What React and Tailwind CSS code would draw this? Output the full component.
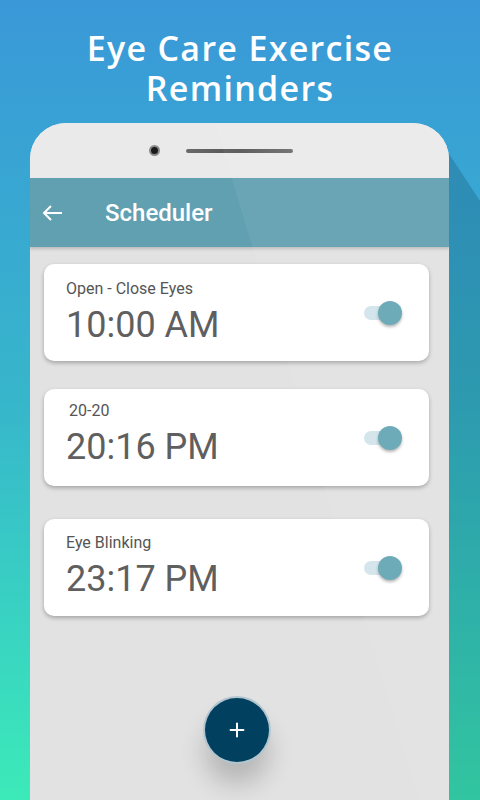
import { Plus } from "lucide-react"

const reminders = [
  { label: "Open - Close Eyes", time: "10:00 AM", top: "mt-[17px]", labelCls: "", blockCls: "pt-[15px]" },
  { label: "20-20", time: "20:16 PM", top: "mt-[28px]", labelCls: "pl-[3px]", blockCls: "pt-[12px]" },
  { label: "Eye Blinking", time: "23:17 PM", top: "mt-[33px]", labelCls: "", blockCls: "pt-[14px]" },
]

// Small switch, always "on" in the screenshot
const Toggle = () => (
  <div className="relative w-[38px] h-[24px] flex items-center">
    <div className="w-[30px] h-[14px] rounded-full bg-[#d2e5ea]" />
    <div className="absolute right-0 top-0 w-[24px] h-[24px] rounded-full bg-[#65a6b5] shadow-[0_2px_3px_rgba(0,0,0,0.3)]" />
  </div>
)

const ReminderCard = ({ item }) => (
  <div className={`${item.top} h-[97px] rounded-[10px] bg-white shadow-[0_2px_4px_rgba(0,0,0,0.28)] flex items-start justify-between pl-[22px] pr-[27px]`}>
    <div className={item.blockCls}>
      <p className={`${item.labelCls} text-[16px] leading-[20px] text-[#555555]`}>{item.label}</p>
      <p className="mt-[6px] text-[36px] leading-[40px] text-[#5f5f5f]">{item.time}</p>
    </div>
    <div className="self-center">
      <Toggle />
    </div>
  </div>
)

export default function App() {
  return (
    <div className="relative w-[480px] h-[800px] overflow-hidden bg-gradient-to-b from-[#3a98d8] via-[#37b6cb] to-[#3ceab8]">
      {/* long shadow behind the phone */}
      <svg className="absolute inset-0" width="480" height="800">
        <polygon points="440,140 480,201 480,800 440,800" fill="rgba(0,20,40,0.17)" />
      </svg>

      <div className="relative pt-[28px] text-center text-white text-[34px] leading-[40px] font-semibold tracking-[1.3px]" style={{ fontFamily: '"Open Sans", sans-serif' }}>
        <h1>Eye Care Exercise</h1>
        <h1>Reminders</h1>
      </div>

      {/* phone */}
      <div className="relative mt-[15px] ml-[30px] w-[419px] h-[677px] rounded-t-[36px] bg-[#e2e2e2] overflow-hidden" style={{ fontFamily: "Roboto, sans-serif" }}>
        <div className="h-[55px] bg-[#eaeaea] flex items-center pl-[119px]">
          <div className="w-[11px] h-[11px] rounded-full bg-[#1a1a1a] border-2 border-[#8a8a8a]" />
          <div className="ml-[26px] w-[107px] h-[4px] rounded-full bg-gradient-to-r from-[#6a6a6a] via-[#555555] to-[#6d6d6d]" />
        </div>

        <div className="relative z-10 h-[69px] bg-[#61a0b1] flex items-center shadow-[0_2px_3px_rgba(0,0,0,0.18)]">
          <svg className="ml-[11px]" width="22" height="18" viewBox="0 0 22 18" fill="none" stroke="white" strokeWidth="2">
            <path d="M21 9H3" />
            <path d="M10 2L3 9l7 7" />
          </svg>
          <span className="ml-[42px] text-white text-[24px] font-medium">Scheduler</span>
        </div>

        <div className="pl-[14px] pr-[20px]">
          {reminders.map((item) => (
            <ReminderCard key={item.label} item={item} />
          ))}

          <div className="mt-[80px] flex justify-center">
            <button className="w-[68px] h-[68px] rounded-full bg-[#02405f] border-2 border-white/70 flex items-center justify-center shadow-[0_22px_26px_-2px_rgba(0,0,0,0.2)]">
              <Plus size={22} color="white" strokeWidth={2.2} />
            </button>
          </div>
        </div>

        {/* screen glare */}
        <svg className="absolute inset-0 pointer-events-none z-20" width="419" height="677">
          <polygon points="185,0 419,0 419,677 389,677" fill="rgba(255,255,255,0.06)" />
        </svg>
      </div>
    </div>
  )
}
